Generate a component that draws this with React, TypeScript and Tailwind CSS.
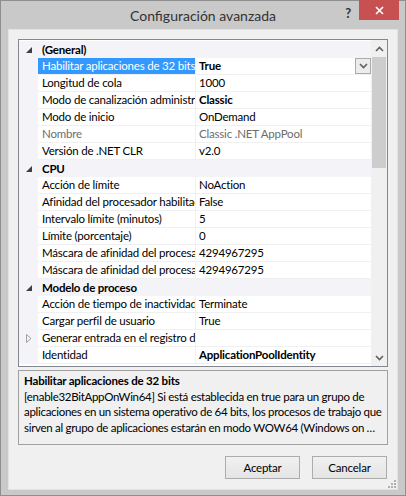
import React from 'react';

type Row =
  | { kind: 'cat'; label: string }
  | { kind: 'prop'; label: string; value: string; bold?: boolean; muted?: boolean; selected?: boolean; expander?: boolean };

const rows: Row[] = [
  { kind: 'cat', label: '(General)' },
  { kind: 'prop', label: 'Habilitar aplicaciones de 32 bits', value: 'True', bold: true, selected: true },
  { kind: 'prop', label: 'Longitud de cola', value: '1000' },
  { kind: 'prop', label: 'Modo de canalización administrada', value: 'Classic', bold: true },
  { kind: 'prop', label: 'Modo de inicio', value: 'OnDemand' },
  { kind: 'prop', label: 'Nombre', value: 'Classic .NET AppPool', muted: true },
  { kind: 'prop', label: 'Versión de .NET CLR', value: 'v2.0' },
  { kind: 'cat', label: 'CPU' },
  { kind: 'prop', label: 'Acción de límite', value: 'NoAction' },
  { kind: 'prop', label: 'Afinidad del procesador habilitada', value: 'False' },
  { kind: 'prop', label: 'Intervalo límite (minutos)', value: '5' },
  { kind: 'prop', label: 'Límite (porcentaje)', value: '0' },
  { kind: 'prop', label: 'Máscara de afinidad del procesador', value: '4294967295' },
  { kind: 'prop', label: 'Máscara de afinidad del procesador (64 bits)', value: '4294967295' },
  { kind: 'cat', label: 'Modelo de proceso' },
  { kind: 'prop', label: 'Acción de tiempo de inactividad', value: 'Terminate' },
  { kind: 'prop', label: 'Cargar perfil de usuario', value: 'True' },
  { kind: 'prop', label: 'Generar entrada en el registro de seguimiento', value: '', expander: true },
  { kind: 'prop', label: 'Identidad', value: 'ApplicationPoolIdentity', bold: true },
];

const font = { fontFamily: 'Lato, "Noto Sans", sans-serif' };

const Expanded = () => (
  <svg width="6" height="6" viewBox="0 0 6 6"><path d="M6 0 L6 6 L0 6 Z" fill="#404040" /></svg>
);

const Collapsed = () => (
  <svg width="6" height="9" viewBox="0 0 6 9"><path d="M0.5 0.5 L5 4.5 L0.5 8.5 Z" fill="none" stroke="#a0a0a0" /></svg>
);

const Chevron = ({ up }: { up?: boolean }) => (
  <svg width="9" height="6" viewBox="0 0 9 6">
    <path d={up ? 'M1 5 L4.5 1.5 L8 5' : 'M1 1 L4.5 4.5 L8 1'} fill="none" stroke="#606060" strokeWidth="1.6" />
  </svg>
);

export default function App() {
  return (
    <div className="w-[406px] h-[496px] bg-[#c9c9c9] border border-[#8f8f8f] flex flex-col text-[11.5px] tracking-[-0.2px] text-black" style={font}>
      <div className="h-[28px] shrink-0 relative flex items-center justify-center">
        <span className="text-[14px] text-[#333333] tracking-normal">Configuración avanzada</span>
        <span className="absolute right-[54px] top-[3px] text-[13px] font-bold text-[#333]">?</span>
        <div className="absolute right-[6px] top-[-1px] w-[40px] h-[20px] bg-[#c75050] flex items-center justify-center text-white">
          <svg width="9" height="9" viewBox="0 0 9 9"><path d="M1 1 L8 8 M8 1 L1 8" stroke="white" strokeWidth="1.6" /></svg>
        </div>
      </div>
      <div className="flex-1 mx-[7px] mb-[7px] bg-[#f0f0f0] border border-[#e2e2e2] px-[9px] pt-[9px] pb-[9px] flex flex-col">
        <div className="h-[328px] border border-[#828790] bg-white flex">
          <div className="flex-1 pt-[1px] flex flex-col overflow-hidden">
            {rows.map((r, i) =>
              r.kind === 'cat' ? (
                <div key={i} className="h-[17px] bg-[#f4f4f8] flex items-center">
                  <div className="w-[19px] flex items-center justify-center pl-[1px]"><Expanded /></div>
                  <span className="pl-[4px] font-bold">{r.label}</span>
                </div>
              ) : (
                <div key={i} className="h-[17px] flex">
                  <div className="w-[19px] bg-[#f4f4f8] flex items-center justify-center">{r.expander && <Collapsed />}</div>
                  <div className={`w-[157px] pl-[4px] flex items-center whitespace-nowrap overflow-hidden border-b border-[#f0f0f0] ${r.selected ? 'bg-[#3399ff] text-white' : ''} ${r.muted ? 'text-[#6d6d6d]' : ''}`}>
                    {r.label}
                  </div>
                  <div className="w-[1px] bg-[#f0f0f0]" />
                  <div className={`flex-1 pl-[3px] flex items-center whitespace-nowrap overflow-hidden border-b border-[#f0f0f0] ${r.bold ? 'font-bold' : ''} ${r.muted ? 'text-[#6d6d6d]' : ''}`}>
                    <span className="flex-1">{r.value}</span>
                    {r.selected && (
                      <span className="w-[16px] h-[16px] border border-[#acacac] bg-[#ececec] flex items-center justify-center">
                        <Chevron />
                      </span>
                    )}
                  </div>
                </div>
              )
            )}
          </div>
          <div className="w-[16px] bg-[#f0f0f0] flex flex-col">
            <div className="h-[17px] flex items-center justify-center"><Chevron up /></div>
            <div className="h-[111px] mx-[1px] bg-[#cdcdcd]" />
            <div className="flex-1" />
            <div className="h-[17px] flex items-center justify-center"><Chevron /></div>
          </div>
        </div>
        <div className="mt-[3px] h-[75px] border border-[#a0a0a0] px-[5px] pt-[2px] leading-[15.5px] tracking-[-0.3px]">
          <div className="font-bold tracking-[-0.2px]">Habilitar aplicaciones de 32 bits</div>
          <div className="whitespace-nowrap overflow-hidden">[enable32BitAppOnWin64] Si está establecida en true para un grupo de</div>
          <div className="whitespace-nowrap overflow-hidden">aplicaciones en un sistema operativo de 64 bits, los procesos de trabajo que</div>
          <div className="whitespace-nowrap overflow-hidden text-ellipsis">sirven al grupo de aplicaciones estarán en modo WOW64 (Windows on Windows 64)</div>
        </div>
        <div className="mt-[11px] flex justify-end gap-[12px] pr-[1px]">
          <button className="w-[75px] h-[23px] border border-[#acacac] bg-gradient-to-b from-[#f0f0f0] to-[#e5e5e5]">Aceptar</button>
          <button className="w-[75px] h-[23px] border border-[#acacac] bg-gradient-to-b from-[#f0f0f0] to-[#e5e5e5]">Cancelar</button>
        </div>
        <div className="flex-1 flex justify-end items-end -mr-[8px] -mb-[8px]">
          <svg width="9" height="9" viewBox="0 0 9 9" fill="#b0b0b0">
            <rect x="7" y="1" width="2" height="2" /><rect x="4" y="4" width="2" height="2" /><rect x="7" y="4" width="2" height="2" />
            <rect x="1" y="7" width="2" height="2" /><rect x="4" y="7" width="2" height="2" /><rect x="7" y="7" width="2" height="2" />
          </svg>
        </div>
      </div>
    </div>
  );
}
